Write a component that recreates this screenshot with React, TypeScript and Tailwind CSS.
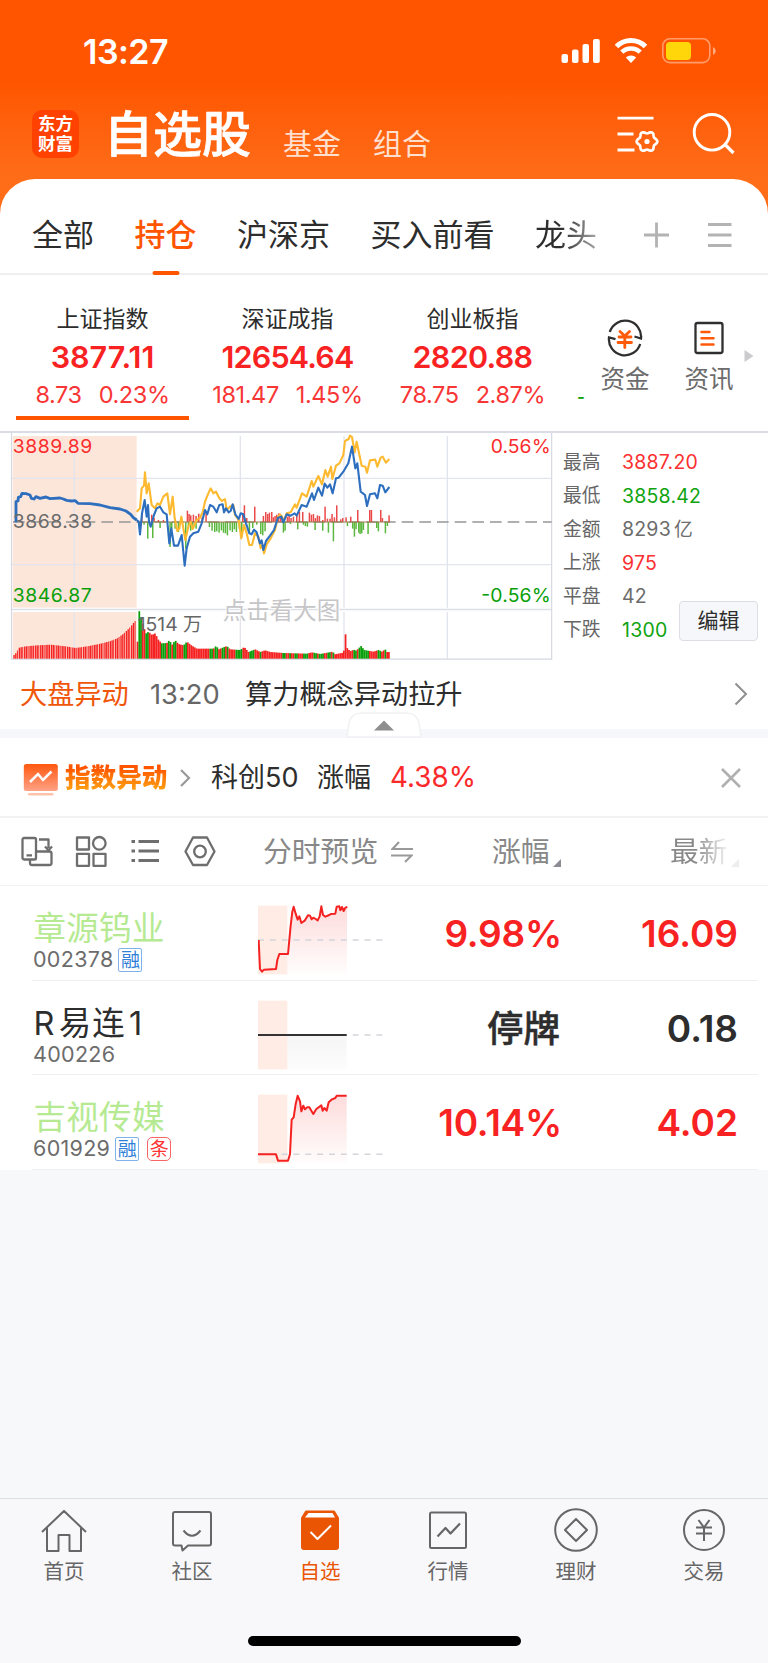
import type { ReactNode } from "react";

type Point = [number, number];

const RED = "#f52222";
const GREEN = "#0a9f0a";

const tabs = ["全部", "持仓", "沪深京", "买入前看"];

const indexes = [
  { name: "上证指数", value: "3877.11", change: "8.73", pct: "0.23%", spacing: "tracking-[0px]" },
  { name: "深证成指", value: "12654.64", change: "181.47", pct: "1.45%", spacing: "tracking-[-0.8px]" },
  { name: "创业板指", value: "2820.88", change: "78.75", pct: "2.87%", spacing: "tracking-[-0.7px]" },
];

const stats = [
  { label: "最高", value: "3887.20", color: "text-[#fb3030]" },
  { label: "最低", value: "3858.42", color: "text-[#0fa40f]" },
  { label: "金额", value: "8293", unit: "亿", color: "text-[#6c6c6c]" },
  { label: "上涨", value: "975", color: "text-[#fb3030]" },
  { label: "平盘", value: "42", color: "text-[#6c6c6c]" },
  { label: "下跌", value: "1300", color: "text-[#0fa40f]" },
];

// chart data, in thirds of a pixel
const bluePoints =
  "410,285 416,290 420,328 426,265 434,225 440,275 444,240 447,290 452,305 462,270 470,250 480,245 490,262 500,268 508,355 514,310 522,362 534,362 545,330 554,422 560,370 570,335 580,325 595,320 605,295 615,255 622,268 630,240 640,245 650,262 658,240 668,238 672,262 678,250 686,262 692,258 698,238 706,268 716,282 722,265 730,268 738,295 748,325 755,328 762,314 770,322 780,355 785,346 790,375 798,348 810,332 822,315 834,278 844,275 850,292 860,268 872,272 884,265 890,272 905,240 920,245 936,205 942,225 955,188 966,212 974,176 982,188 990,178 998,205 1008,160 1016,158 1030,140 1045,115 1056,65 1066,130 1072,115 1082,200 1095,210 1101,243 1110,208 1125,205 1132,220 1140,180 1148,182 1156,202 1168,186";
const preBluePoints =
  "48,292 48,230 54,228 55,217 62,215 66,205 78,206 90,210 94,220 102,222 108,215 120,220 138,216 150,221 180,219 190,222 200,226 215,228 226,227 234,235 270,236 300,240 330,248 360,252 378,258 392,268 400,278 410,285";
const yellowPoints =
  "410,260 420,250 425,190 432,182 435,142 440,205 446,175 455,240 465,250 472,235 480,240 490,215 502,205 510,268 518,215 524,280 532,318 538,310 544,275 556,345 565,305 572,290 578,312 590,285 600,278 608,262 615,230 625,205 632,190 640,205 648,200 658,220 666,228 675,222 680,255 690,245 700,240 705,270 716,285 724,340 732,300 740,325 748,360 756,360 765,325 775,335 782,370 788,360 792,385 800,358 812,340 825,315 834,275 840,268 846,275 850,290 860,265 872,262 885,238 890,248 906,205 920,215 935,168 940,185 955,153 966,178 976,135 983,155 993,125 997,162 1008,122 1018,115 1030,90 1035,48 1046,42 1050,32 1056,36 1064,82 1070,50 1085,122 1096,125 1101,143 1110,106 1126,104 1132,125 1142,98 1148,95 1158,113 1168,102";

const upBars: Point[] = [
  [425, 24], [455, 22], [462, 12], [475, 6], [490, 6], [562, 34], [567, 24], [572, 20], [580, 22], [588, 18],
  [596, 25], [606, 14], [618, 30], [715, 10], [728, 24], [733, 50], [740, 12], [764, 46], [790, 18], [797, 30],
  [803, 24], [808, 28], [815, 30], [820, 14], [825, 18], [830, 22], [836, 26], [842, 20], [862, 16], [867, 20],
  [873, 12], [880, 16], [890, 20], [898, 30], [908, 30], [928, 28], [934, 22], [940, 24], [946, 12], [952, 20],
  [958, 18], [968, 6], [975, 46], [982, 10], [990, 10], [996, 24], [1003, 14], [1010, 50], [1022, 8], [1028, 12],
  [1038, 14], [1052, 16], [1073, 36], [1109, 36], [1114, 36], [1142, 36], [1147, 12], [1167, 20],
];
const downBars: Point[] = [
  [420, 30], [432, 8], [443, 50], [458, 48], [480, 18], [510, 75], [515, 20], [525, 20], [535, 30], [557, 80],
  [565, 20], [572, 26], [578, 18], [588, 20], [628, 15], [636, 26], [644, 30], [650, 28], [657, 32], [664, 25],
  [670, 32], [676, 34], [682, 40], [690, 25], [697, 30], [703, 22], [709, 30], [718, 20], [725, 45], [748, 30],
  [758, 18], [770, 8], [782, 36], [788, 40], [795, 28], [850, 32], [855, 26], [871, 6], [893, 22], [910, 8],
  [916, 12], [922, 14], [945, 24], [968, 26], [985, 32], [1000, 58], [1042, 12], [1058, 20], [1063, 44],
  [1068, 22], [1076, 32], [1080, 36], [1085, 34], [1090, 24], [1104, 36], [1130, 18], [1135, 28], [1156, 34], [1162, 12],
];

const volumeTops: Point[] = [
  [40, 690], [46, 684], [56, 668], [75, 664], [110, 661], [150, 659], [195, 664], [225, 669], [260, 664], [300, 656],
  [330, 648], [350, 640], [370, 625], [390, 605], [403, 588], [409, 588], [412, 650], [417, 558], [422, 575], [430, 606],
  [438, 625], [445, 620], [455, 630], [465, 625], [475, 645], [485, 655], [500, 654], [508, 645], [515, 660], [525, 646],
  [535, 657], [550, 661], [560, 650], [575, 662], [590, 671], [640, 671], [648, 662], [655, 673], [680, 663], [690, 673],
  [720, 675], [732, 666], [745, 681], [765, 673], [780, 681], [795, 676], [810, 681], [850, 684], [920, 686], [935, 682],
  [960, 687], [998, 680], [1003, 688], [1030, 683], [1033, 660], [1036, 628], [1040, 668], [1050, 679], [1060, 674],
  [1068, 677], [1075, 670], [1083, 663], [1092, 675], [1120, 680], [1135, 675], [1145, 680], [1155, 673], [1160, 681], [1175, 681],
];

const greenRanges: Point[] = [
  [414, 426], [434, 446], [480, 496], [502, 514], [518, 528], [552, 558], [628, 640], [646, 656], [666, 673], [678, 684],
  [705, 724], [746, 764], [778, 784], [845, 858], [868, 874], [885, 893], [910, 926], [942, 948], [955, 970], [984, 991],
  [997, 1003], [1058, 1072], [1076, 1106], [1134, 1140], [1153, 1159],
];

function topAt(x: number) {
  const i = volumeTops.findIndex((p) => p[0] >= x);
  if (i <= 0) return volumeTops[0][1];
  const [x0, y0] = volumeTops[i - 1];
  const [x1, y1] = volumeTops[i];
  return y0 + ((y1 - y0) * (x - x0)) / (x1 - x0);
}

const preVolume = Array.from({ length: 69 }, (_, i) => 40 + i * 5.35);
const volume = Array.from({ length: 146 }, (_, i) => 410 + i * 5.2);

const gearPath =
  Array.from({ length: 72 }, (_, i) => {
    const a = (i * Math.PI) / 36;
    const r = 9.2 + 1.1 * Math.cos(6 * a);
    return `${i ? "L" : "M"}${(30 + r * Math.cos(a)).toFixed(2)} ${(26.5 + r * Math.sin(a)).toFixed(2)}`;
  }).join("") + "Z";

function IndexChart() {
  return (
    <svg width="556" height="230" viewBox="0 18 1668 690" className="block shrink-0" fontFamily='Inter, "Noto Sans CJK SC", sans-serif'>
      <rect x="38" y="33" width="372" height="515" fill="#fce6da" />
      <rect x="38" y="561" width="372" height="140" fill="#fce6da" />
      <g stroke="#e2e5ee" strokeWidth="4" fill="none">
        <path d="M223 33V548M223 561V701M721 33V548M721 561V701M1032 33V548M1032 561V701M1342 33V548M1342 561V701" />
        <path d="M35 160H1655M35 419H1655" />
        <path d="M35 553.5H1655" strokeWidth="5" stroke="#dcdfe8" />
        <path d="M34.5 24V702.5H1655V24" strokeWidth="3.5" stroke="#d5d8e2" />
      </g>
      <path d="M36 291H1655" stroke="#979797" strokeWidth="4" strokeDasharray="35 18" strokeDashoffset="50" />
      <g fill="#ea4a4a">
        {upBars.map(([x, h]) => (
          <rect key={x} x={x - 2} y={291 - h} width="4.5" height={h} />
        ))}
      </g>
      <g fill="#5bb83f">
        {downBars.map(([x, h]) => (
          <rect key={x} x={x - 2} y={291} width="4.5" height={h} />
        ))}
      </g>
      <path d="M410 291H1170" stroke="#a07a50" strokeWidth="3" />
      {preVolume.map((x, i) => (
        <rect key={x} x={x} y={topAt(x)} width={i % 3 === 2 ? 3 : 4.2} height={701 - topAt(x)} fill={RED} />
      ))}
      {volume.map((x) => (
        <rect
          key={x}
          x={x}
          y={topAt(x + 2)}
          width="5.3"
          height={701 - topAt(x + 2)}
          fill={greenRanges.some(([a, b]) => x + 2 >= a && x + 2 <= b) ? GREEN : RED}
        />
      ))}
      <g fill="none" strokeLinejoin="round">
        <polyline points={yellowPoints} stroke="#fdb92f" strokeWidth="6.3" />
        <polyline points={bluePoints} stroke="#2d6fbe" strokeWidth="6.3" />
        <polyline points={preBluePoints} stroke="#2d6fbe" strokeWidth="8.5" />
      </g>
      <text x="38" y="84" fontSize="58" textLength="239" fill="#fb2c2c">3889.89</text>
      <text x="38" y="308" fontSize="58" textLength="239" fill="#6b6b6b">3868.38</text>
      <text x="38" y="532" fontSize="58" textLength="237" fill={GREEN}>3846.87</text>
      <text x="1652" y="84" fontSize="58" textAnchor="end" textLength="180" fill="#fb2c2c">0.56%</text>
      <text x="1652" y="532" fontSize="58" textAnchor="end" textLength="208" fill={GREEN}>-0.56%</text>
      <text x="413" y="618" fontSize="58" fill="#666">1514</text>
      <text x="549" y="618" fontSize="57" fill="#666">万</text>
      <text x="668" y="581" fontSize="70.5" fill="#c6c6c8" stroke="#fff" strokeWidth="5" paintOrder="stroke">点击看大图</text>
    </svg>
  );
}

type MiniChartProps = { line: string; baseY: number; color: string; fade: number; id: string };

function MiniChart({ line, baseY, color, fade, id }: MiniChartProps) {
  // the fill starts after the pre-market band
  return (
    <svg width="126" height="70" viewBox="0 0 378 210" className="block">
      <defs>
        <linearGradient id={id} x1="0" y1="0" x2="0" y2="1">
          <stop offset="0" stopColor={color} stopOpacity={fade} />
          <stop offset="1" stopColor={color} stopOpacity="0.01" />
        </linearGradient>
        <clipPath id={id + "-clip"}>
          <rect x="88" y="0" width="180" height="210" />
        </clipPath>
      </defs>
      <rect x="0" y="2" width="88" height="206" fill="#ffece4" />
      <polygon points={`${line} 266,208 0,208`} fill={`url(#${id})`} clipPath={`url(#${id}-clip)`} />
      <path d={`M0 ${baseY}H374`} stroke="#d4d5da" strokeWidth="4.5" strokeDasharray="18 17.5" />
      <polyline points={line} fill="none" stroke={color} strokeWidth="6" strokeLinejoin="round" />
    </svg>
  );
}

const stocks = [
  {
    name: "章源钨业",
    code: "002378",
    tags: ["融"],
    pct: "9.98%",
    price: "16.09",
    muted: false,
    baseY: 105,
    line: "2,105 6,192 12,200 18,194 54,192 58,165 64,147 90,147 98,62 103,20 107,5 113,26 119,44 124,34 130,54 140,47 150,31 156,32 161,43 166,38 173,42 179,46 185,34 190,4 195,30 202,35 214,30 218,27 232,26 236,5 244,4 247,16 252,6 257,18 262,8 268,6",
  },
  {
    name: "R易连1",
    code: "400226",
    tags: [],
    pct: "停牌",
    price: "0.18",
    muted: true,
    baseY: 105,
    line: "0,105 266,105",
  },
  {
    name: "吉视传媒",
    code: "601929",
    tags: ["融", "条"],
    pct: "10.14%",
    price: "4.02",
    muted: false,
    baseY: 181,
    line: "0,181 54,181 60,200 90,200 96,180 101,77 107,70 113,30 119,5 126,22 130,52 136,35 141,46 147,40 154,40 160,50 166,60 175,45 190,34 194,50 199,42 206,50 212,25 222,16 232,12 236,5 266,5",
  },
];

function Tag({ text }: { text: string }) {
  const style = text === "融" ? "border-[#7fb2ea] text-[#2f7fd9] rounded-[2px] mr-2" : "border-[#f76565] text-[#f33] rounded-[5px]";
  return (
    <span className={`flex h-6 w-6 items-center justify-center border-[1.5px] text-[19px] leading-none ${style}`}>{text}</span>
  );
}

function NavItem({ label, active, children }: { label: string; active?: boolean; children: ReactNode }) {
  return (
    <div className={`flex w-32 flex-col items-center ${active ? "text-[#ea5504]" : "text-[#666]"}`}>
      <svg width="48" height="48" viewBox="0 0 48 48" fill="none" stroke="currentColor" strokeWidth="2" strokeLinejoin="round">
        {children}
      </svg>
      <span className="mt-[6px] text-[20.5px] leading-[26px]">{label}</span>
    </div>
  );
}

export default function App() {
  return (
    <div className='flex h-[1663px] w-[768px] flex-col overflow-hidden bg-[#f7f8fa] font-[Inter,"Noto_Sans_CJK_SC",sans-serif] text-[#2d2d2d]'>
      <header className="h-[179px] shrink-0 bg-linear-to-b from-[#ff5500] from-[45%] to-[#ff6d18] text-white">
        <div className="flex h-[102px] items-center pl-[83px]">
          <span className="w-[478px] pt-[2px] text-[34px] font-semibold leading-none tracking-[-0.5px]">13:27</span>
          <svg width="160" height="30" viewBox="0 0 160 30" fill="white">
            <rect x="0.5" y="18" width="6.5" height="9" rx="2" />
            <rect x="11" y="13.5" width="6.5" height="13.5" rx="2" />
            <rect x="21.5" y="8" width="6.5" height="19" rx="2" />
            <rect x="32" y="3" width="6.8" height="24" rx="2" />
            <g fill="none" stroke="white">
              <path d="M55.5 10.5A20.5 20.5 0 0 1 84.5 10.5" strokeWidth="5" />
              <path d="M60.8 16.2A13 13 0 0 1 79.2 16.2" strokeWidth="4.5" />
            </g>
            <path d="M70 27L64.8 21.6A7.5 7.5 0 0 1 75.2 21.6Z" />
            <rect x="101.8" y="2.8" width="47" height="23.8" rx="7" fill="none" stroke="white" strokeOpacity="0.42" strokeWidth="1.6" />
            <rect x="105" y="6" width="25" height="18" rx="4" fill="#ffd60a" />
            <path d="M152 11V19Q154.8 17.500 154.800 15T152 11" fillOpacity="0.5" />
          </svg>
        </div>
        <div className="flex h-[77px]">
          <div className="ml-8 mt-2 flex h-12 w-[47px] flex-col items-center justify-center rounded-[10px] bg-[#ff4102] text-[17.5px] font-bold leading-[20px]">
            <span>东方</span>
            <span>财富</span>
          </div>
          <h1 className="ml-[25px] mt-[9px] text-[49px] font-medium leading-[48px] [-webkit-text-stroke:0.7px_white]">自选股</h1>
          <span className="ml-[32px] mt-[27px] text-[29px] leading-8 text-[#ffdfce]">基金</span>
          <span className="ml-[32px] mt-[27px] text-[29px] leading-8 text-[#ffdfce]">组合</span>
          <svg width="44" height="40" viewBox="0 0 44 40" className="ml-[186px] mt-[13px]" fill="none" stroke="white" strokeWidth="2.8">
            <path d="M0.5 3.2H36.5M0.5 19H16.5M0.5 35H17.5" />
            <path d={gearPath} strokeWidth="2.7" />
            <circle cx="30" cy="26.5" r="2.6" fill="white" stroke="none" />
          </svg>
          <svg width="44" height="44" viewBox="0 0 44 44" className="ml-[31px] mt-[10px]" fill="none" stroke="white" strokeWidth="2.9">
            <circle cx="20" cy="20.3" r="17.8" />
            <path d="M32.500 32L41.500 41" strokeWidth="3.2" />
          </svg>
        </div>
      </header>

      <div className="shrink-0 bg-[#ff6d18]">
        <nav className="flex h-24 items-center rounded-t-[35px] border-b-2 border-[#efeff1] bg-white pl-8 text-[31px]">
          {tabs.map((tab) => (
            <div
              key={tab}
              className={`relative mr-[40.500px] flex h-full items-center pt-[17px] leading-none ${tab === "持仓" ? "font-medium text-[#ff5400]" : ""}`}
            >
              {tab}
              {tab === "持仓" && <i className="absolute bottom-[-2px] left-1/2 h-1 w-[27px] -translate-x-1/2 rounded-xs bg-[#ff5400]" />}
            </div>
          ))}
          <span className="bg-linear-to-r from-[#2d2d2d] from-40% to-[#aaa] bg-clip-text pt-[17px] leading-none text-transparent">龙头</span>
          <svg width="90" height="28" viewBox="0 0 90 28" className="ml-[46px] mt-[17px]" stroke="#b3b3b3" strokeWidth="2.8">
            <path d="M1 14H26M13.500 1.500V26.500M65 3.500H88.500M65 14H88.500M65 24.500H88.500" />
          </svg>
        </nav>
      </div>

      <section className="flex h-[156px] shrink-0 bg-white pl-[10px]">
        {indexes.map((item, i) => (
          <div key={item.name} className="relative flex w-[185px] flex-col items-center">
            <span className="mt-[31px] text-[23px] leading-[27px]">{item.name}</span>
            <span className={`mt-[8px] text-[30.5px] font-semibold leading-[32px] text-[#f92222] ${item.spacing}`}>{item.value}</span>
            <span className="mt-[8px] flex gap-[17px] text-[23.5px] leading-[27px] tracking-[-0.4px] text-[#f93636]">
              <span>{item.change}</span>
              <span>{item.pct}</span>
            </span>
            {i === 0 && <i className="absolute bottom-[11px] left-[6px] h-[4.5px] w-[173px] bg-[#ff5400]" />}
          </div>
        ))}
        <div className="w-[28px] pl-[12px] pt-[108px] text-[17px] font-semibold leading-[28px] text-[#0fa40f]">-</div>
        <div className="flex w-[64px] flex-col items-center pt-[44px] text-[24.5px] leading-[28px] text-[#6c6c6c]">
          <svg width="36" height="38" viewBox="0 0 36 38" fill="none" stroke="#2f2f2f" strokeWidth="2.3">
            <path d="M2.800 13A16 16 0 0 1 34 19.500L27.500 17.500" />
            <path d="M33.200 25A16 16 0 0 1 2 18.500L8.500 20.200" />
            <path d="M13 12.5L17.8 17L22.500 12.5M12 18H24M11 23.500H24.500M17.800 17V28.500" stroke="#ff5a0a" strokeWidth="2.8" strokeLinecap="round" />
          </svg>
          <span className="mt-[8px]">资金</span>
        </div>
        <div className="ml-[20px] flex w-[64px] flex-col items-center pt-[44px] text-[24.5px] leading-[28px] text-[#6c6c6c]">
          <svg width="36" height="38" viewBox="0 0 36 38" fill="none" stroke="#2f2f2f" strokeWidth="2.3">
            <rect x="4.500" y="4" width="27" height="30" rx="2" />
            <path d="M10.500 13H18.500M10.500 19.300H22.500M10.500 25.500H22.500" stroke="#ff5a0a" strokeWidth="2.5" strokeLinecap="round" />
          </svg>
          <span className="mt-[8px]">资讯</span>
        </div>
        <svg width="10" height="14" viewBox="0 0 10 14" className="ml-[3px] mt-[74px]" fill="#cbcbcd">
          <path d="M0.500 1L9.500 7L0.500 13Z" />
        </svg>
      </section>

      <section className="flex h-[229px] shrink-0 border-t-2 border-[#dadde5] bg-white">
        <div className="mt-[-2px]">
          <IndexChart />
        </div>
        <div className="mt-[13px] w-[123px] pl-[7px]">
          {stats.map((s) => (
            <div key={s.label} className="flex h-[33.5px] items-center whitespace-nowrap">
              <span className="w-[59px] shrink-0 text-[18.8px] text-[#666]">{s.label}</span>
              <span className={`text-[19.5px] tracking-[0.2px] ${s.color}`}>
                {s.value}
                {s.unit && <span className="ml-[3px] text-[18.8px]">{s.unit}</span>}
              </span>
            </div>
          ))}
        </div>
        <button className="mt-[168px] h-[40px] w-[79px] rounded-[4px] border-[1.5px] border-[#dcdee4] bg-[#f6f7fa] pb-[2px] text-[21px] leading-none">
          编辑
        </button>
      </section>

      <section className="relative flex h-[69px] shrink-0 items-center bg-white pl-[20px] pt-[2px] text-[27.2px]">
        <span className="w-[130px] text-[#f0560a]">大盘异动</span>
        <span className="w-[95px] text-[27.3px] text-[#666]">13:20</span>
        <span className="w-[489px]">算力概念异动拉升</span>
        <svg width="14" height="24" viewBox="0 0 14 24" fill="none" stroke="#8f8f8f" strokeWidth="2" className="mb-[3px]">
          <path d="M1.500 1.500L12 12L1.500 22.500" />
        </svg>
        <svg width="78" height="28" viewBox="0 0 78 28" className="absolute left-[345px] top-[51px] z-10">
          <path d="M2 26L4 12Q6 2 17 2H61Q72 2 74 12L76 26Z" fill="white" stroke="#f0f1f3" strokeWidth="1.5" />
          <path d="M29 19.500L39 9.500L49 19.500Z" fill="#8e8e8e" />
        </svg>
      </section>
      <div className="h-[9px] shrink-0 bg-[#f6f7fa]" />

      <section className="flex h-[80px] shrink-0 items-center border-b-2 border-[#f2f2f4] bg-white pl-[23px] pt-[2px] text-[27px]">
        <svg width="36" height="34" viewBox="0 0 36 34" className="mt-[3px]">
          <defs>
            <linearGradient id="badge" x1="0" y1="0" x2="0" y2="1">
              <stop offset="0" stopColor="#ff580e" />
              <stop offset="1" stopColor="#ffa287" />
            </linearGradient>
          </defs>
          <rect x="0.800" y="1" width="34" height="27" rx="2.500" fill="url(#badge)" />
          <path d="M7 19L15 11L20 17L28.500 8.500" fill="none" stroke="white" strokeWidth="2.5" />
          <rect x="5" y="30" width="25.500" height="2.500" rx="1" fill="#ffc3ac" />
        </svg>
        <span className="ml-[6px] w-[115px] bg-linear-to-b from-[#ff5500] from-25% to-[#ff9d12] to-80% bg-clip-text text-[25.6px] font-black text-transparent">
          指数异动
        </span>
        <svg width="11" height="20" viewBox="0 0 11 20" fill="none" stroke="#999" strokeWidth="2.2">
          <path d="M1 2L9 10L1 18" />
        </svg>
        <span className="ml-[20px] w-[106px]">科创50</span>
        <span className="w-[73px]">涨幅</span>
        <span className="w-[331px] text-[27.8px] text-[#fb2a2a]">4.38%</span>
        <svg width="20" height="20" viewBox="0 0 20 20" stroke="#b0b0b0" strokeWidth="2.6">
          <path d="M1 1L19 19M19 1L1 19" />
        </svg>
      </section>

      <section className="flex h-[69px] shrink-0 items-center border-b-2 border-[#f2f2f4] bg-white pl-[21px] pt-px text-[28.8px] text-[#888]">
        <svg width="196" height="34" viewBox="0 0 196 34" fill="none" stroke="#6e6e6e" strokeWidth="2.3" strokeLinejoin="round">
          <rect x="1.500" y="3" width="13.500" height="21.500" rx="1.500" />
          <path d="M5.500 20.300H11M18 4.500H27.500V13M24 11.500L27.500 15.200L31 11.500M15 16.500H28.500Q30.500 16.500 30.500 18.500V28Q30.500 30 28.500 30H11Q9 30 9 28V25" />
          <rect x="56" y="2.500" width="12" height="12" />
          <circle cx="78.300" cy="8.300" r="6.300" />
          <rect x="56" y="18.800" width="12" height="12" />
          <rect x="72.500" y="18.800" width="12" height="12" />
          <path d="M117.500 6.5H138M117.500 16H138M117.500 25.5H138" strokeWidth="3" />
          <path d="M110.500 6.5H114M110.500 16H114M110.500 25.5H114" strokeWidth="3" />
          <path d="M172 2.500H186L193.500 16.500L186 30H172L164.500 16.500Z" />
          <circle cx="179" cy="16.500" r="5.800" />
        </svg>
        <span className="ml-[46px] w-[128px]">分时预览</span>
        <svg width="22" height="24" viewBox="0 0 22 24" fill="none" stroke="#999" strokeWidth="2.1">
          <path d="M22 9H1.500L8 2M0 15.500H20.500L14 22" />
        </svg>
        <span className="ml-[79px] w-[61px]">涨幅</span>
        <svg width="8" height="8" viewBox="0 0 8 8" className="mt-[22px]" fill="#8c8c94">
          <path d="M8 0V8H0Z" />
        </svg>
        <span className="ml-[109px] w-[61px] bg-linear-to-r from-[#888] from-40% to-[#f4f4f4] to-95% bg-clip-text text-transparent">最新</span>
        <svg width="8" height="8" viewBox="0 0 8 8" className="mt-[22px]" fill="#ededf0">
          <path d="M8 0V8H0Z" />
        </svg>
      </section>

      <section className="mt-[-1px] shrink-0 bg-white">
        {stocks.map((s) => (
          <div key={s.code} className="ml-8 mr-[10px] flex h-[94.5px] border-b-[1.5px] border-[#f0f0f2]">
            <div className="w-[226px]">
              <div
                className={`ml-[1.5px] mt-[25px] text-[32.5px] leading-[36px] ${s.muted ? "tracking-[1.2px] text-[#2d2d2d]" : "tracking-[0.3px] text-[#b6ea92]"}`}
              >
                {s.muted ? (
                  <>
                    R<span className="ml-[3px]">易连</span>
                    <span className="ml-[3px]">1</span>
                  </>
                ) : (
                  s.name
                )}
              </div>
              <div className="ml-px mt-px flex h-6 items-center text-[21.5px] leading-none text-[#6c6c6c]">
                <span className="mr-[5px] tracking-[0.3px]">{s.code}</span>
                {s.tags.map((t) => (
                  <Tag key={t} text={t} />
                ))}
              </div>
            </div>
            <div className="w-[126px] pt-[19px]">
              <MiniChart
                id={"mini" + s.code}
                line={s.line}
                baseY={s.baseY}
                color={s.muted ? "#333333" : RED}
                fade={s.muted ? 0.05 : 0.16}
              />
            </div>
            <span
              className={`w-[178px] pt-[26px] text-right leading-[44px] ${s.muted ? "pr-[2px] text-[36.5px] font-medium text-[#2d2d2d] [-webkit-text-stroke:0.5px_#2d2d2d]" : "text-[37px] font-semibold tracking-[-0.2px] text-[#f92222]"}`}
            >
              {s.pct}
            </span>
            <span
              className={`w-[176px] pt-[26px] text-right text-[37px] font-semibold leading-[44px] ${s.muted ? "text-[#2d2d2d]" : "text-[#f92222]"}`}
            >
              {s.price}
            </span>
          </div>
        ))}
      </section>

      <footer className="mt-auto h-[165px] shrink-0 border-t border-[#dddee1] bg-[#f8f8fb]">
        <div className="flex pt-[6px]">
          <NavItem label="首页">
            <path d="M2 27L24 6L46 27M7 23V46H18.500V30H29.500V46H41V23" />
          </NavItem>
          <NavItem label="社区">
            <path d="M7 7H41Q43 7 43 9V38.500Q43 40.500 41 40.500H20L14.500 45.500L13.500 40.500H7Q5 40.500 5 38.500V9Q5 7 7 7ZM15.500 25.500Q24 36 32.500 25.500" />
          </NavItem>
          <NavItem label="自选" active>
            <path d="M10 6.500H38L42 13V42Q42 44 40 44H8Q6 44 6 42V13Z" fill="#ea5504" />
            <path d="M12.500 8H36.500L39 12.500H9Z" fill="white" stroke="none" />
            <path d="M14.500 27L21.500 34L35 20.500" stroke="white" strokeWidth="2" />
          </NavItem>
          <NavItem label="行情">
            <rect x="6" y="7.500" width="36" height="35.500" rx="1.500" />
            <path d="M13.500 31.500L21.500 23L26.500 28.500L36 18.500" strokeWidth="2.2" />
          </NavItem>
          <NavItem label="理财">
            <circle cx="24" cy="25" r="20.800" />
            <path d="M24 14L35 25L24 36L13 25Z" />
          </NavItem>
          <NavItem label="交易">
            <circle cx="24" cy="25" r="20" />
            <path d="M18.500 15L24 22.500L29.500 15M16 22.500H32M16 28.500H32M24 22.500V36" />
          </NavItem>
        </div>
        <div className="mx-auto mt-[51px] h-[10px] w-[273px] rounded-full bg-black" />
      </footer>
    </div>
  );
}
